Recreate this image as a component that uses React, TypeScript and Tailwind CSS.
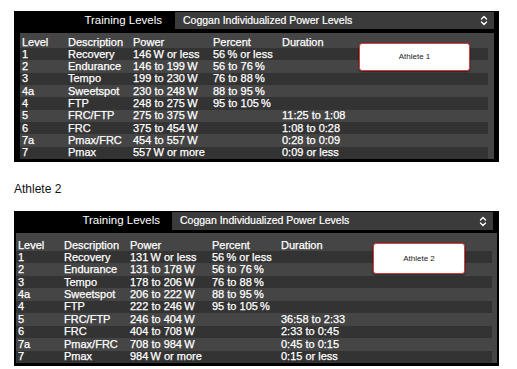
import React from "react";

const levels = ["1", "2", "3", "4a", "4", "5", "6", "7a", "7"];
const descriptions = ["Recovery", "Endurance", "Tempo", "Sweetspot", "FTP", "FRC/FTP", "FRC", "Pmax/FRC", "Pmax"];
const percents = ["56\u2009% or less", "56 to 76\u2009%", "76 to 88\u2009%", "88 to 95\u2009%", "95 to 105\u2009%", "", "", "", ""];

const athletes = [
  {
    name: "Athlete 1",
    power: ["146\u2009W or less", "146 to 199\u2009W", "199 to 230\u2009W", "230 to 248\u2009W", "248 to 275\u2009W", "275 to 375\u2009W", "375 to 454\u2009W", "454 to 557\u2009W", "557\u2009W or more"],
    duration: ["", "", "", "", "", "11:25 to 1:08", "1:08 to 0:28", "0:28 to 0:09", "0:09 or less"],
  },
  {
    name: "Athlete 2",
    power: ["131\u2009W or less", "131 to 178\u2009W", "178 to 206\u2009W", "206 to 222\u2009W", "222 to 246\u2009W", "246 to 404\u2009W", "404 to 708\u2009W", "708 to 984\u2009W", "984\u2009W or more"],
    duration: ["", "", "", "", "", "36:58 to 2:33", "2:33 to 0:45", "0:45 to 0:15", "0:15 or less"],
  },
];

type Layout = {
  panel: string;
  tab: string;
  header: string;
  dropdownRight: string;
  table: string;
  headRow: string;
  cols: string;
  stripeRight: string;
  badge: string;
};

const layouts: Layout[] = [
  {
    panel: "w-[485px] h-[151px] pt-[1px]",
    tab: "w-[161px] pr-[13px]",
    header: "h-[17px] mb-[4px]",
    dropdownRight: "mr-[5px]",
    table: "ml-[6px] mr-[5px] h-[126px]",
    headRow: "h-[15px] pt-[4px]",
    cols: "grid-cols-[46px_65px_80px_69px_1fr]",
    stripeRight: "mr-[6px]",
    badge: "left-[339px] top-[10px] w-[111px] h-[28px]",
  },
  {
    panel: "w-[485px] h-[155px] pt-[1px]",
    tab: "w-[158px] pr-[12px]",
    header: "h-[18px] mb-[3px]",
    dropdownRight: "mr-[6px]",
    table: "ml-[2px] mr-[2px] h-[130px]",
    headRow: "h-[18px] pt-[7px]",
    cols: "grid-cols-[46px_66px_82px_69px_1fr]",
    stripeRight: "mr-[5px]",
    badge: "left-[357px] top-[10px] w-[92px] h-[31px]",
  },
];

function Chevrons() {
  return (
    <svg width="8" height="11" viewBox="0 0 8 11" fill="none" stroke="white" strokeWidth="1.4" strokeLinecap="round" strokeLinejoin="round">
      <path d="M1.5 4 L4 1.5 L6.5 4" />
      <path d="M1.5 7 L4 9.5 L6.5 7" />
    </svg>
  );
}

function LevelsPanel({ index }: { index: number }) {
  const a = athletes[index];
  const l = layouts[index];
  return (
    <div className={`bg-black flex flex-col ${l.panel}`}>
      <div className={`flex ${l.header}`}>
        <div className={`${l.tab} flex items-center justify-end text-[11.5px] text-white`}>Training Levels</div>
        <div className={`flex-1 flex items-center justify-between bg-[#3b3b3b] pl-[8px] pr-[6px] text-[10.5px] text-white [-webkit-text-stroke:0.2px_white] ${l.dropdownRight}`}>
          <span>Coggan Individualized Power Levels</span>
          <Chevrons />
        </div>
      </div>
      <div className={`relative bg-[#454545] flex flex-col text-white [-webkit-text-stroke:0.25px_white] ${l.table}`}>
        <div className={`grid ${l.cols} pl-[2px] text-[11px] leading-[11px] ${l.headRow}`}>
          <span>Level</span>
          <span>Description</span>
          <span>Power</span>
          <span>Percent</span>
          <span>Duration</span>
        </div>
        <div className="flex-1 flex flex-col">
          {levels.map((lv, i) => (
            <div
              key={lv}
              className={`flex-1 grid ${l.cols} items-center pl-[2px] text-[11px] leading-[11px] ${l.stripeRight} ${i % 2 === 0 ? "bg-[#333333]" : "bg-[#454545]"}`}
            >
              <span>{lv}</span>
              <span>{descriptions[i]}</span>
              <span>{a.power[i]}</span>
              <span>{percents[i]}</span>
              <span>{a.duration[i]}</span>
            </div>
          ))}
        </div>
        <div
          className={`absolute ${l.badge} bg-white border border-[#e0393e] rounded-[3px] shadow-[0_1px_2px_rgba(0,0,0,0.5)] flex items-center justify-center text-[8px] text-[#222] [-webkit-text-stroke:0]`}
        >
          {a.name}
        </div>
      </div>
    </div>
  );
}

export default function App() {
  return (
    <div className="w-[517px] h-[369px] bg-white pt-[11px] pl-[14px] font-['Liberation_Sans',Arial,sans-serif]">
      <LevelsPanel index={0} />
      <div className="mt-[20px] mb-[15px] text-[12px] leading-[14px] text-[#111]">Athlete 2</div>
      <LevelsPanel index={1} />
    </div>
  );
}
